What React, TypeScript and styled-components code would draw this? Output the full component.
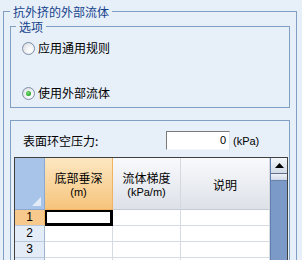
import React from "react";
import styled, { createGlobalStyle, css } from "styled-components";

const rows = [1, 2, 3];

export default function App() {
    return (
        <>
            <GlobalStyle />
            <Group>
                <Legend>抗外挤的外部流体</Legend>
                <OptionsGroup>
                    <Legend>选项</Legend>
                    <RadioRow>
                        <Radio checked={false} />
                        应用通用规则
                    </RadioRow>
                    <RadioRow>
                        <Radio checked />
                        使用外部流体
                    </RadioRow>
                </OptionsGroup>
                <Panel>
                    <FieldRow>
                        <FieldLabel>表面环空压力:</FieldLabel>
                        <Input>0</Input>
                        <Unit>(kPa)</Unit>
                    </FieldRow>
                    <Grid>
                        <Corner />
                        <HeaderCell selected>
                            <Title>底部垂深</Title>
                            <Sub>(m)</Sub>
                        </HeaderCell>
                        <HeaderCell>
                            <Title>流体梯度</Title>
                            <Sub>(kPa/m)</Sub>
                        </HeaderCell>
                        <HeaderCell>
                            <Title>说明</Title>
                        </HeaderCell>
                        <ScrollBar>
                            <ScrollButton>
                                <svg width="9" height="5" viewBox="0 0 9 5">
                                    <path d="M0 5 L4.5 0 L9 5 Z" fill="#000" />
                                </svg>
                            </ScrollButton>
                            <Thumb />
                        </ScrollBar>
                        {rows.map((r) => (
                            <React.Fragment key={r}>
                                <RowHeader selected={r === 1}>{r}</RowHeader>
                                <Cell selected={r === 1} />
                                <Cell />
                                <Cell />
                            </React.Fragment>
                        ))}
                        <RowHeader />
                        <Cell />
                        <Cell />
                        <Cell />
                    </Grid>
                </Panel>
            </Group>
        </>
    );
}

type SelProps = {
    selected?: boolean;
};

const GlobalStyle = createGlobalStyle`
    html, body {
        margin: 0;
        padding: 0;
    }
    body {
        width: 302px;
        height: 260px;
        overflow: hidden;
        background: #e7eff9;
        font-family: "Noto Sans CJK SC", "Liberation Sans", sans-serif;
        font-size: 12px;
        color: #000;
    }
`;

const Group = styled.fieldset`
    margin: 5px 5px 0 3px;
    padding: 2px 6px 0 6px;
    border: 1px solid #7f9fc3;
    min-width: 0;
    height: 400px;
`;

const Legend = styled.legend`
    padding: 0 3px;
    color: #15428b;
    font-size: 12px;
    line-height: 13px;
    height: 13px;
`;

const OptionsGroup = styled.fieldset`
    margin: 0;
    padding: 7px 6px 6px 5px;
    border: 1px solid #7f9fc3;
    min-width: 0;
    display: flex;
    flex-direction: column;
    gap: 29px;
`;

const RadioRow = styled.label`
    display: flex;
    align-items: center;
    gap: 3px;
    height: 16px;
    line-height: 16px;
    padding-left: 6px;
`;

const Radio = styled.span<{ checked: boolean }>`
    position: relative;
    width: 11px;
    height: 11px;
    border: 1px solid #7c8fa8;
    border-radius: 50%;
    background: radial-gradient(circle at 65% 65%, #ffffff 0%, #eef0f3 45%, #d2d6dc 100%);
    ${({ checked }) => checked && css`
        &::after {
            content: "";
            position: absolute;
            left: 3px;
            top: 3px;
            width: 5px;
            height: 5px;
            border-radius: 50%;
            background: radial-gradient(circle at 40% 40%, #7ee07e 0%, #22a322 70%);
        }
    `}
`;

const Panel = styled.div`
    margin-top: 12px;
    border: 1px solid #7f9fc3;
    padding: 10px 1px 0 3px;
`;

const FieldRow = styled.div`
    display: flex;
    align-items: center;
    height: 19px;
`;

const FieldLabel = styled.span`
    width: 152px;
    padding-left: 9px;
    box-sizing: border-box;
    line-height: 14px;
`;

const Input = styled.div`
    width: 64px;
    height: 19px;
    box-sizing: border-box;
    background: #fff;
    border-style: solid;
    border-width: 1px;
    border-color: #7a7a7a #e2e6ec #f4f6f9 #7a7a7a;
    text-align: right;
    padding-right: 3px;
    font-family: "Liberation Sans", sans-serif;
    font-size: 11px;
    line-height: 17px;
`;

const Unit = styled.span`
    margin-left: 3px;
    font-family: "Liberation Sans", sans-serif;
    font-size: 11px;
`;

const Grid = styled.div`
    margin-top: 7px;
    border: 1px solid #404040;
    background: #fff;
    display: grid;
    grid-template-columns: 30px 68px 68px 1fr 17px;
    grid-template-rows: 52px repeat(${rows.length}, 16px) 30px;
`;

const Corner = styled.div`
    position: relative;
    background: #a9c4e9;
    border-right: 1px solid #8aa8d0;
    border-bottom: 1px solid #8aa8d0;
    box-sizing: border-box;
    &::after {
        content: "";
        position: absolute;
        right: 3px;
        bottom: 3px;
        border-style: solid;
        border-width: 0 0 9px 9px;
        border-color: transparent transparent #e2ebf7 transparent;
    }
`;

const HeaderCell = styled.div<SelProps>`
    box-sizing: border-box;
    display: flex;
    flex-direction: column;
    align-items: center;
    justify-content: center;
    padding-top: 3px;
    border-right: 1px solid #d5d9df;
    border-bottom: 1px solid #c4cad3;
    background: linear-gradient(#f9fafc, #dde1e8);
    ${({ selected }) => selected && css`
        background: linear-gradient(#fce7c2, #f6c47c);
        border-right-color: #f2b35f;
        border-bottom-color: #f2b35f;
    `}
`;

const Title = styled.span`
    display: block;
    height: 14px;
    line-height: 14px;
`;

const Sub = styled.span`
    display: block;
    height: 14px;
    font-family: "Liberation Sans", sans-serif;
    font-size: 11px;
    line-height: 14px;
`;

const ScrollBar = styled.div`
    grid-column: 5;
    grid-row: 1 / -1;
    background: #7b9ac8;
    border-left: 1px solid #5f7fb0;
    display: flex;
    flex-direction: column;
`;

const ScrollButton = styled.div`
    height: 16px;
    box-sizing: border-box;
    display: flex;
    align-items: center;
    justify-content: center;
    background: linear-gradient(#f4f7fb, #d1dae8);
    border-bottom: 1px solid #5f6f88;
`;

const Thumb = styled.div`
    height: 6px;
    background: linear-gradient(#eef2f8, #cfd9e8);
    border-bottom: 1px solid #6b83a8;
`;

const RowHeader = styled.div<SelProps>`
    box-sizing: border-box;
    background: #e4ecf7;
    border-right: 1px solid #9eb6ce;
    border-bottom: 1px solid #b8c9dd;
    font-family: "Liberation Sans", sans-serif;
    font-size: 12px;
    line-height: 15px;
    text-align: center;
    ${({ selected }) => selected && css`
        background: #f8c98c;
        border-right-color: #f2b35f;
    `}
`;

const Cell = styled.div<SelProps>`
    box-sizing: border-box;
    border-right: 1px solid #d6dbe3;
    border-bottom: 1px solid #d6dbe3;
    ${({ selected }) => selected && css`
        box-shadow: inset 0 0 0 2px #000;
        border-color: #000;
    `}
`;
